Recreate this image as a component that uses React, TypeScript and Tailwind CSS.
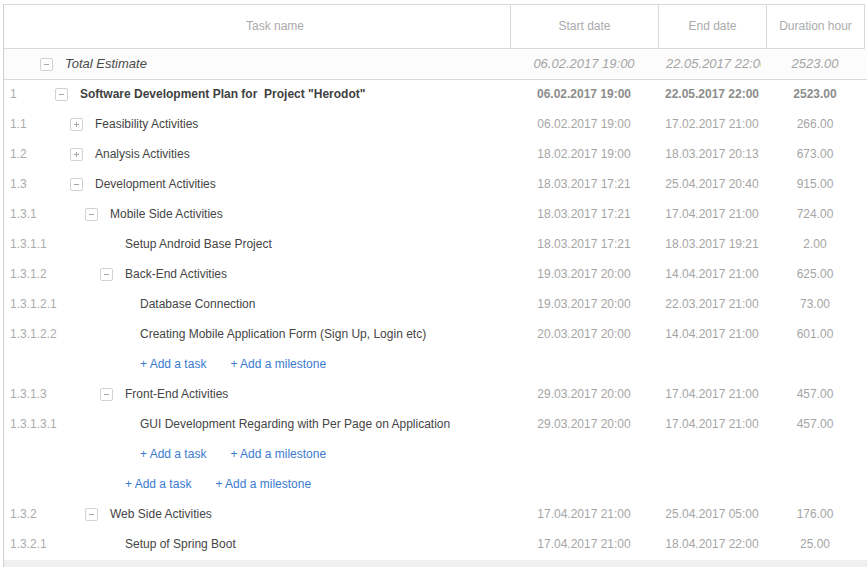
import React from "react";

type Row =
  | {
      kind: "task";
      wbs: string;
      name: string;
      level: number;
      toggle?: "minus" | "plus";
      start: string;
      end: string;
      hours: string;
      bold?: boolean;
    }
  | { kind: "add"; level: number };

const rows: Row[] = [
  { kind: "task", wbs: "1", name: 'Software Development Plan for\u00a0 Project "Herodot"', level: 1, toggle: "minus", start: "06.02.2017 19:00", end: "22.05.2017 22:00", hours: "2523.00", bold: true },
  { kind: "task", wbs: "1.1", name: "Feasibility Activities", level: 2, toggle: "plus", start: "06.02.2017 19:00", end: "17.02.2017 21:00", hours: "266.00" },
  { kind: "task", wbs: "1.2", name: "Analysis Activities", level: 2, toggle: "plus", start: "18.02.2017 19:00", end: "18.03.2017 20:13", hours: "673.00" },
  { kind: "task", wbs: "1.3", name: "Development Activities", level: 2, toggle: "minus", start: "18.03.2017 17:21", end: "25.04.2017 20:40", hours: "915.00" },
  { kind: "task", wbs: "1.3.1", name: "Mobile Side Activities", level: 3, toggle: "minus", start: "18.03.2017 17:21", end: "17.04.2017 21:00", hours: "724.00" },
  { kind: "task", wbs: "1.3.1.1", name: "Setup Android Base Project", level: 4, start: "18.03.2017 17:21", end: "18.03.2017 19:21", hours: "2.00" },
  { kind: "task", wbs: "1.3.1.2", name: "Back-End Activities", level: 4, toggle: "minus", start: "19.03.2017 20:00", end: "14.04.2017 21:00", hours: "625.00" },
  { kind: "task", wbs: "1.3.1.2.1", name: "Database Connection", level: 5, start: "19.03.2017 20:00", end: "22.03.2017 21:00", hours: "73.00" },
  { kind: "task", wbs: "1.3.1.2.2", name: "Creating Mobile Application Form (Sign Up, Login etc)", level: 5, start: "20.03.2017 20:00", end: "14.04.2017 21:00", hours: "601.00" },
  { kind: "add", level: 5 },
  { kind: "task", wbs: "1.3.1.3", name: "Front-End Activities", level: 4, toggle: "minus", start: "29.03.2017 20:00", end: "17.04.2017 21:00", hours: "457.00" },
  { kind: "task", wbs: "1.3.1.3.1", name: "GUI Development Regarding with Per Page on Application", level: 5, start: "29.03.2017 20:00", end: "17.04.2017 21:00", hours: "457.00" },
  { kind: "add", level: 5 },
  { kind: "add", level: 4 },
  { kind: "task", wbs: "1.3.2", name: "Web Side Activities", level: 3, toggle: "minus", start: "17.04.2017 21:00", end: "25.04.2017 05:00", hours: "176.00" },
  { kind: "task", wbs: "1.3.2.1", name: "Setup of Spring Boot", level: 4, start: "17.04.2017 21:00", end: "18.04.2017 22:00", hours: "25.00" },
];

function Toggle({ type }: { type: "minus" | "plus" }) {
  return (
    <span className="relative mr-[12px] h-[13px] w-[13px] shrink-0 rounded-[2px] border border-[#d2d2d2] bg-white">
      <span className="absolute left-[3px] top-[5px] h-px w-[5px] bg-[#a8a8a8]" />
      {type === "plus" && (
        <span className="absolute left-[5px] top-[3px] h-[5px] w-px bg-[#a8a8a8]" />
      )}
    </span>
  );
}

export default function App() {
  return (
    <div
      className="h-[567px] w-[867px] overflow-hidden bg-white pl-[3px] pt-[4px] text-[12px] text-[#454545]"
      style={{ fontFamily: '"Liberation Sans", Arial, sans-serif' }}
    >
      <div className="border-l border-[#d0d0d0]">
        {/* Header */}
        <div className="flex h-[45px] w-[861px] items-center border-y border-[#d9d9d9] text-[#ababab]">
          <div className="w-[36px] shrink-0" />
          <div className="w-[470px] shrink-0 pb-[2px] text-center">Task name</div>
          <div className="flex h-full w-[148px] shrink-0 items-center justify-center border-l border-[#d9d9d9] pb-[2px]">
            Start date
          </div>
          <div className="flex h-full w-[108px] shrink-0 items-center justify-center border-l border-[#d9d9d9] pb-[2px]">
            End date
          </div>
          <div className="flex h-full w-[99px] shrink-0 items-center justify-center border-x border-[#d9d9d9] pb-[2px]">
            Duration hour
          </div>
        </div>

        {/* Total estimate */}
        <div className="flex h-[31px] items-center border-b border-[#d9d9d9] bg-[#fcfcfc]">
          <div className="flex w-[506px] shrink-0 items-center">
            <span className="w-[36px] shrink-0" />
            <Toggle type="minus" />
            <span className="text-[13px] italic text-[#4a4a4a]">Total Estimate</span>
          </div>
          <div className="w-[148px] shrink-0 overflow-hidden whitespace-nowrap px-2 text-center text-[13px] italic text-[#a5a5a5]">
            06.02.2017 19:00
          </div>
          <div className="w-[108px] shrink-0 pl-[8px]">
            <div className="w-[95px] overflow-hidden whitespace-nowrap text-[13px] italic text-[#a5a5a5]">
              22.05.2017 22:00
            </div>
          </div>
          <div className="w-[98px] shrink-0 text-center text-[13px] italic text-[#a5a5a5]">2523.00</div>
        </div>

        {/* Rows */}
        {rows.map((r, i) =>
          r.kind === "add" ? (
            <div key={i} className="flex h-[30px] items-center pb-[2px]">
              <span className="w-[36px] shrink-0" />
              <div
                className="flex items-center gap-[24px] text-[#3a7bd0]"
                style={{ paddingLeft: r.level * 15 + 25 }}
              >
                <span>+ Add a task</span>
                <span>+ Add a milestone</span>
              </div>
            </div>
          ) : (
            <div
              key={i}
              className={`flex h-[30px] items-center pb-[2px] ${r.bold ? "font-bold" : ""}`}
            >
              <div className="flex w-[506px] shrink-0 items-center overflow-hidden whitespace-nowrap">
                <span className="w-[36px] shrink-0 pl-[6px] font-normal text-[#ababab]">
                  {r.wbs}
                </span>
                <div
                  className="flex items-center"
                  style={{ paddingLeft: r.level * 15 }}
                >
                  {r.toggle ? (
                    <Toggle type={r.toggle} />
                  ) : (
                    <span className="w-[25px] shrink-0" />
                  )}
                  <span className={r.bold ? "text-[#3f3f3f]" : ""}>{r.name}</span>
                </div>
              </div>
              <div className={`w-[148px] shrink-0 text-center ${r.bold ? "text-[#8c8c8c]" : "text-[#a5a5a5]"}`}>
                {r.start}
              </div>
              <div className={`w-[108px] shrink-0 text-center ${r.bold ? "text-[#8c8c8c]" : "text-[#a5a5a5]"}`}>
                {r.end}
              </div>
              <div className={`w-[98px] shrink-0 text-center ${r.bold ? "text-[#8c8c8c]" : "text-[#a5a5a5]"}`}>
                {r.hours}
              </div>
            </div>
          )
        )}

        <div className="h-[20px] bg-[#f0f0f0]" />
      </div>
    </div>
  );
}
